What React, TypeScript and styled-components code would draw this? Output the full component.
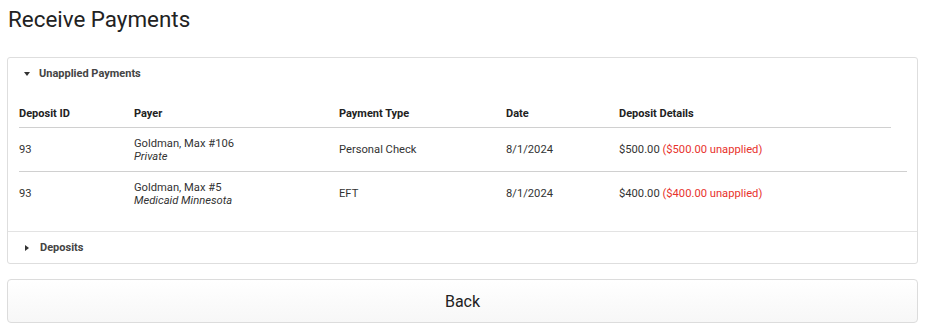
import React from "react";
import styled, { createGlobalStyle } from "styled-components";

type Payment = {
  id: string;
  payer: string;
  plan: string;
  type: string;
  date: string;
  amount: string;
  unapplied: string;
};

const payments: Payment[] = [
  {
    id: "93",
    payer: "Goldman, Max #106",
    plan: "Private",
    type: "Personal Check",
    date: "8/1/2024",
    amount: "$500.00",
    unapplied: "($500.00 unapplied)",
  },
  {
    id: "93",
    payer: "Goldman, Max #5",
    plan: "Medicaid Minnesota",
    type: "EFT",
    date: "8/1/2024",
    amount: "$400.00",
    unapplied: "($400.00 unapplied)",
  },
];

const columns = ["Deposit ID", "Payer", "Payment Type", "Date", "Deposit Details"];

const App: React.FC = () => {
  return (
    <Page>
      <GlobalStyle />
      <Title>Receive Payments</Title>
      <Panel>
        <SectionHeader>
          <Caret open />
          Unapplied Payments
        </SectionHeader>
        <SectionBody>
          <HeadRow>
            {columns.map((c) => (
              <HeadCell key={c}>{c}</HeadCell>
            ))}
          </HeadRow>
          {payments.map((p, i) => (
            <Row key={i}>
              <Cell>{p.id}</Cell>
              <Cell>
                <div>{p.payer}</div>
                <Plan>{p.plan}</Plan>
              </Cell>
              <Cell>{p.type}</Cell>
              <Cell>{p.date}</Cell>
              <Cell>
                {p.amount} <Unapplied>{p.unapplied}</Unapplied>
              </Cell>
            </Row>
          ))}
        </SectionBody>
        <SectionHeader bordered>
          <Caret />
          Deposits
        </SectionHeader>
      </Panel>
      <BackButton>Back</BackButton>
    </Page>
  );
};

export default App;

const GlobalStyle = createGlobalStyle`
  body {
    margin: 0;
    background: #fff;
    font-family: Roboto, "Liberation Sans", sans-serif;
    color: #333;
  }
`;

const Page = styled.div`
  padding: 6px 11px 0 7px;
  display: flex;
  flex-direction: column;
`;

const Title = styled.h1`
  margin: 0 0 0 1px;
  height: 51px;
  font-size: 22.4px;
  line-height: 26px;
  font-weight: 400;
  color: #222;
`;

const Panel = styled.section`
  border: 1px solid #dedede;
  border-radius: 3px;
  background: #fff;
`;

const SectionHeader = styled.div<{ bordered?: boolean }>`
  height: 31px;
  display: flex;
  align-items: center;
  padding-left: 16px;
  font-size: 11px;
  font-weight: 700;
  color: #444;
  border-top: ${(p) => (p.bordered ? "1px solid #e3e3e3" : "none")};
`;

const Caret = styled.span<{ open?: boolean }>`
  width: 0;
  height: 0;
  margin-right: ${(p) => (p.open ? "9px" : "11px")};
  margin-left: ${(p) => (p.open ? "0" : "1px")};
  ${(p) =>
    p.open
      ? `border-left: 3.5px solid transparent;
         border-right: 3.5px solid transparent;
         border-top: 4px solid #333;`
      : `border-top: 3.5px solid transparent;
         border-bottom: 3.5px solid transparent;
         border-left: 4px solid #333;`}
`;

const SectionBody = styled.div`
  padding: 9px 10px 16px 11px;
`;

const grid = `
  display: grid;
  grid-template-columns: 115px 205px 167px 113px 1fr;
  align-items: center;
`;

const HeadRow = styled.div`
  ${grid}
  height: 30px;
  position: relative;
  &::after {
    content: "";
    position: absolute;
    left: 0;
    right: 16px;
    bottom: 0;
    border-bottom: 1px solid #d0d0d0;
  }
`;

const HeadCell = styled.div`
  font-size: 11px;
  font-weight: 700;
  color: #222;
`;

const Row = styled.div`
  ${grid}
  height: 43px;
  & + & {
    border-top: 1px solid #d0d0d0;
  }
`;

const Cell = styled.div`
  font-size: 11.2px;
  line-height: 13px;
  color: #333;
`;

const Plan = styled.div`
  font-style: italic;
`;

const Unapplied = styled.span`
  color: #e8322c;
`;

const BackButton = styled.button`
  margin-top: 15px;
  height: 44px;
  border: 1px solid #dcdcdc;
  border-radius: 4px;
  background: linear-gradient(#ffffff, #f7f7f7);
  font-family: Roboto, "Liberation Sans", sans-serif;
  font-size: 16px;
  color: #222;
  cursor: pointer;
`;
